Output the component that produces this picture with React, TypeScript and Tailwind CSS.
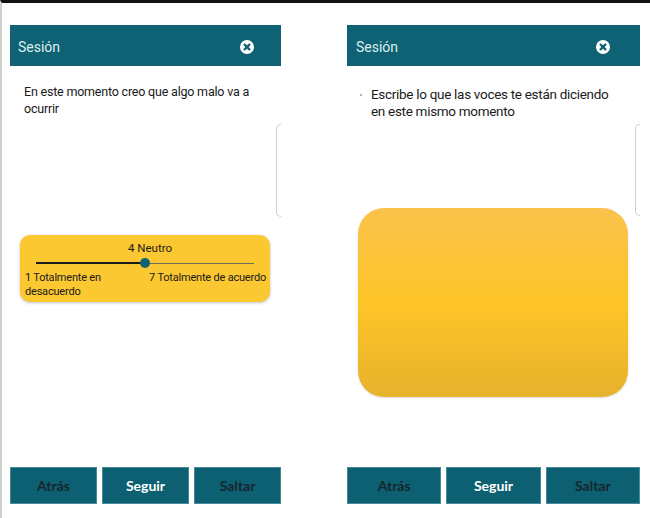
import React from "react";

const teal = "bg-[#0e6273]";

function CloseIcon() {
  return (
    <svg width="14" height="14" viewBox="0 0 14 14">
      <circle cx="7" cy="7" r="7" fill="#ffffff" />
      <path d="M4.6 4.6 L9.4 9.4 M9.4 4.6 L4.6 9.4" stroke="#0e6273" strokeWidth="2.2" strokeLinecap="round" />
    </svg>
  );
}

function Header({ pl, pr }: { pl: string; pr: string }) {
  return (
    <div className={`${teal} h-[41px] pt-[3px] flex items-center justify-between ${pl} ${pr}`}>
      <span className="text-[14px] text-[#dcefF1]" style={{ fontFamily: "Roboto, 'Noto Sans', sans-serif" }}>
        Sesión
      </span>
      <CloseIcon />
    </div>
  );
}

function Buttons() {
  const base =
    "flex-1 h-[37px] bg-[#0d6072] border border-[#4a8996] flex items-center justify-center text-[14px] font-bold";
  return (
    <div className="flex gap-[5px]" style={{ fontFamily: "Lato, 'Open Sans', sans-serif" }}>
      <div className={`${base} text-[#16262c]`}>Atrás</div>
      <div className={`${base} text-white`}>Seguir</div>
      <div className={`${base} text-[#16262c]`}>Saltar</div>
    </div>
  );
}

function PartialEdge({ mt, h }: { mt: string; h: string }) {
  return <div className={`w-[5px] ${mt} ${h} border border-r-0 border-[#cfcfcf] rounded-l-[5px] shrink-0`} />;
}

export default function App() {
  return (
    <div
      className="w-[650px] h-[518px] bg-white border-t-[3px] border-t-[#111111] border-l-2 border-l-[#cfcfcf] flex overflow-hidden"
      style={{ fontFamily: "Roboto, 'Noto Sans', sans-serif" }}
    >
      {/* Left panel */}
      <div className="ml-[8px] mt-[22px] w-[271px] h-[479px] flex flex-col">
        <Header pl="pl-[8px]" pr="pr-[27px]" />
        <div className="flex flex-1">
          <div className="flex-1 flex flex-col">
            <p className="mt-[17px] pl-[14px] text-[12.5px] tracking-[-0.2px] leading-[17px] text-[#1a1a1a]">
              En este momento creo que algo malo va a ocurrir
            </p>
            <div className="mt-[118px] ml-[10px] w-[250px] rounded-[10px] bg-[#fcc832] shadow-[0_1px_3px_rgba(0,0,0,0.25)] pt-[6px] pb-[3px] text-[#1a1a1a]">
              <div className="text-center pl-[10px] text-[11.5px] leading-[14px]">4 Neutro</div>
              <div className="relative h-[16px] mx-[16px]">
                <div className="absolute left-0 top-[7px] w-[110px] h-[2px] bg-[#1a1a1a]" />
                <div className="absolute left-[110px] right-0 top-[7.5px] h-[1px] bg-[#6b6b5a]" />
                <div className="absolute left-[104px] top-[3px] w-[10px] h-[10px] rounded-full bg-[#0e6273]" />
              </div>
              <div className="flex justify-between pl-[5px] pr-[4px] text-[11px] tracking-[-0.2px] leading-[14px]">
                <span className="w-[84px]">1 Totalmente en desacuerdo</span>
                <span>7 Totalmente de acuerdo</span>
              </div>
            </div>
          </div>
          <PartialEdge mt="mt-[58px]" h="h-[93px]" />
        </div>
        <Buttons />
      </div>

      {/* Right panel */}
      <div className="ml-[66px] mt-[22px] w-[293px] h-[479px] flex flex-col">
        <Header pl="pl-[9px]" pr="pr-[30px]" />
        <div className="flex flex-1">
          <div className="flex-1 flex flex-col">
            <div className="mt-[20px] pl-[13px] flex items-start">
              <span className="mt-[8px] w-[2px] h-[2px] rounded-full bg-[#9a9a9a] mr-[9px] shrink-0" />
              <p className="text-[13.5px] tracking-[-0.3px] leading-[17px] text-[#1a1a1a] pr-[20px]">
                Escribe lo que las voces te están diciendo en este mismo momento
              </p>
            </div>
            <div className="mt-[88px] ml-[11px] w-[270px] h-[189px] rounded-[26px] bg-[linear-gradient(180deg,#fbc24c_0%,#fcc43a_25%,#fdc526_50%,#f3bb2a_75%,#e6b22c_100%)] shadow-[0_1px_2px_rgba(0,0,0,0.15)]" />
          </div>
          <PartialEdge mt="mt-[58px]" h="h-[92px]" />
        </div>
        <Buttons />
      </div>
    </div>
  );
}
